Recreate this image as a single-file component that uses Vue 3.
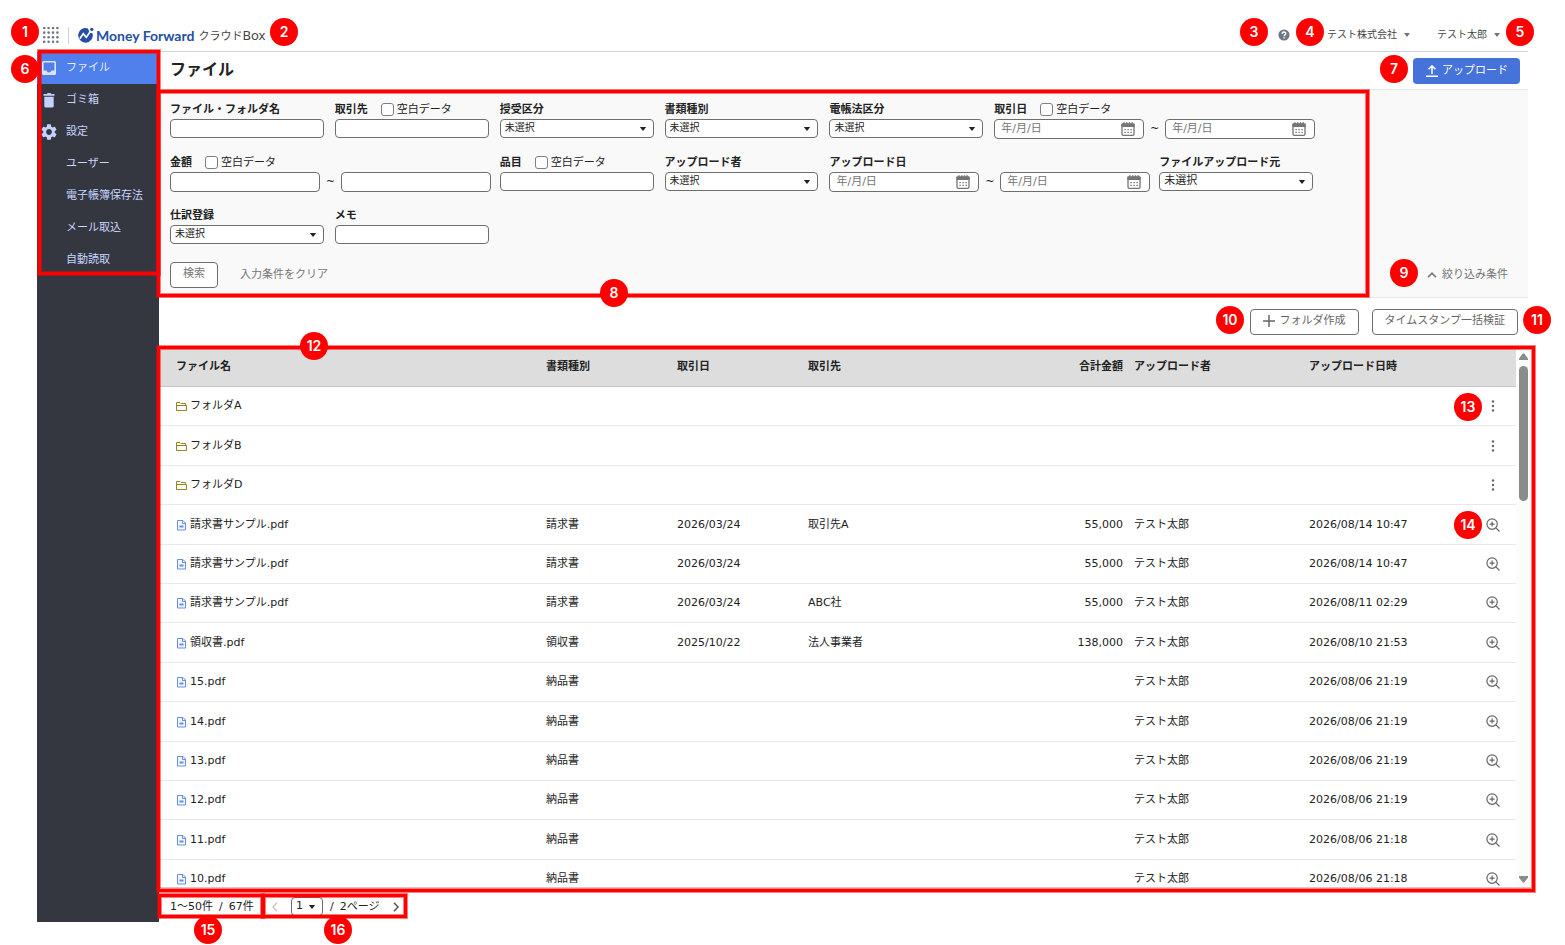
<script setup>
import { ref } from 'vue'

const navItems = [
  { label: 'ファイル', icon: 'inbox', active: true },
  { label: 'ゴミ箱', icon: 'trash' },
  { label: '設定', icon: 'gear' },
  { label: 'ユーザー' },
  { label: '電子帳簿保存法' },
  { label: 'メール取込' },
  { label: '自動読取' },
]

const fields = [
  { id: 'name', label: 'ファイル・フォルダ名', type: 'text' },
  { id: 'partner', label: '取引先', type: 'text', blank: true },
  { id: 'direction', label: '授受区分', type: 'select' },
  { id: 'doctype', label: '書類種別', type: 'select' },
  { id: 'lawtype', label: '電帳法区分', type: 'select' },
  { id: 'trade-date', label: '取引日', type: 'date', blank: true },
  { id: 'amount', label: '金額', type: 'range', blank: true },
  { id: 'item', label: '品目', type: 'text', blank: true },
  { id: 'uploader', label: 'アップロード者', type: 'select' },
  { id: 'upload-date', label: 'アップロード日', type: 'date' },
  { id: 'source', label: 'ファイルアップロード元', type: 'select', large: true },
  { id: 'journal', label: '仕訳登録', type: 'select' },
  { id: 'memo', label: 'メモ', type: 'text' },
]

const folder = (name, badge) => ({ folder: true, name, badge })
const file = (name, type, date, partner, amount, time, badge) => ({
  name, type, date, partner, amount, user: 'テスト太郎', time, badge,
})

const rows = ref([
  folder('フォルダA', 13),
  folder('フォルダB'),
  folder('フォルダD'),
  file('請求書サンプル.pdf', '請求書', '2026/03/24', '取引先A', '55,000', '2026/08/14 10:47', 14),
  file('請求書サンプル.pdf', '請求書', '2026/03/24', '', '55,000', '2026/08/14 10:47'),
  file('請求書サンプル.pdf', '請求書', '2026/03/24', 'ABC社', '55,000', '2026/08/11 02:29'),
  file('領収書.pdf', '領収書', '2025/10/22', '法人事業者', '138,000', '2026/08/10 21:53'),
  file('15.pdf', '納品書', '', '', '', '2026/08/06 21:19'),
  file('14.pdf', '納品書', '', '', '', '2026/08/06 21:19'),
  file('13.pdf', '納品書', '', '', '', '2026/08/06 21:19'),
  file('12.pdf', '納品書', '', '', '', '2026/08/06 21:19'),
  file('11.pdf', '納品書', '', '', '', '2026/08/06 21:18'),
  file('10.pdf', '納品書', '', '', '', '2026/08/06 21:18'),
])
</script>

<template>
  <div class="page">
    <header class="topbar">
      <button class="plain" type="button" aria-label="アプリ一覧">
        <svg class="icon16" viewBox="0 0 16 16" fill="#6f7787">
          <template v-for="y in 4" :key="y">
            <circle v-for="x in 4" :key="x" :cx="x * 4.4 - 3.2" :cy="y * 4.6 - 3.6" r="1.3" />
          </template>
        </svg>
      </button>
      <a class="logo" href="#">
        <svg class="logo-mark" viewBox="0 0 17 17">
          <path d="M11 1.500A7.300 7.300 0 1 0 15.500 6.300L12.500 5.500z" fill="#2350a2" />
          <path d="M2.800 11.800 6.300 6.600 9.300 10.400 13.200 4.600" fill="none" stroke="#fff" stroke-width="1.700" />
          <circle cx="14.800" cy="2.400" r="1.700" fill="#2350a2" />
        </svg>
        <span class="logo-name">Money Forward</span>
        <span class="logo-product">クラウド<span class="logo-box">Box</span></span>
      </a>
      <div class="account">
        <button class="plain" type="button" aria-label="ヘルプ">
          <svg class="icon12" viewBox="0 0 12 12">
            <circle cx="6" cy="6" r="5.6" fill="#6f7787" />
            <path d="M4.2 4.8C4.2 2.4 7.9 2.5 7.8 4.7 7.7 6 6.1 5.9 6.1 7.2M6.1 8.2v1.4" fill="none" stroke="#fff" stroke-width="1.4" />
          </svg>
        </button>
        <button class="plain company" type="button">テスト株式会社<i class="caret"></i></button>
        <button class="plain user" type="button">テスト太郎<i class="caret"></i></button>
      </div>
      <span class="badge b1">1</span><span class="badge b2">2</span><span class="badge b3">3</span>
      <span class="badge b4">4</span><span class="badge b5">5</span>
    </header>

    <div class="body">
      <aside class="sidebar">
        <nav>
          <a v-for="n in navItems" :key="n.label" href="#" :class="['nav-item', { active: n.active }]">
            <span class="nav-icon">
              <svg v-if="n.icon === 'inbox'" class="icon16" viewBox="0 0 16 16">
                <path fill="#dbe4ff" fill-rule="evenodd" d="M2.500 1h11A1.500 1.500 0 0 1 15 2.500v11a1.500 1.500 0 0 1-1.500 1.500h-11A1.500 1.500 0 0 1 1 13.500v-11A1.500 1.500 0 0 1 2.500 1zM2.600 2.600v8H5.500a2.600 2.600 0 0 0 5 0h2.900v-8z" />
              </svg>
              <svg v-else-if="n.icon === 'trash'" class="icon16" viewBox="0 0 16 16">
                <path fill="#c5d2ff" d="M2.500 2h3.200l1-1h2.600l1 1h3.200v1.700h-11zM3.300 4.700h9.400V14a1.500 1.500 0 0 1-1.500 1.500H4.800A1.500 1.500 0 0 1 3.300 14z" />
              </svg>
              <svg v-else-if="n.icon === 'gear'" class="icon16" viewBox="2 2 20 20">
                <path fill="#c5d2ff" d="M19.140 12.940c.04-.3.06-.61.06-.94 0-.32-.02-.64-.07-.94l2.030-1.580c.18-.14.23-.41.12-.61l-1.920-3.320c-.12-.22-.37-.29-.59-.22l-2.390.96c-.5-.38-1.030-.7-1.620-.94l-.36-2.540c-.04-.24-.24-.41-.48-.41h-3.840c-.24 0-.43.17-.47.41l-.36 2.540c-.59.24-1.130.57-1.620.94l-2.390-.96c-.22-.08-.47 0-.59.22L2.740 8.870c-.12.21-.08.47.12.61l2.030 1.580c-.05.3-.09.63-.09.94s.02.64.07.94l-2.030 1.580c-.18.14-.23.41-.12.61l1.920 3.320c.12.22.37.29.59.22l2.390-.96c.5.38 1.030.7 1.620.94l.36 2.540c.05.24.24.41.48.41h3.840c.24 0 .44-.17.47-.41l.36-2.540c.59-.24 1.130-.56 1.620-.94l2.390.96c.22.08.47 0 .59-.22l1.920-3.320c.12-.22.07-.47-.12-.61l-2.010-1.580zM12 15.600c-1.980 0-3.600-1.620-3.600-3.600s1.620-3.600 3.600-3.600 3.600 1.620 3.600 3.600-1.620 3.600-3.600 3.600z" />
              </svg>
            </span>
            {{ n.label }}
          </a>
          <span class="frame f6" aria-hidden="true"></span>
          <span class="badge b6">6</span>
        </nav>
      </aside>

      <main>
        <div class="title-row">
          <h1>ファイル</h1>
          <button class="upload" type="button">
            <svg class="icon12" viewBox="0 0 12 12" fill="none" stroke="#fff" stroke-width="1.5">
              <path d="M6 9V1M2.500 4.300 6 .9 9.500 4.300M0 11.200h12" />
            </svg>
            アップロード
          </button>
          <span class="badge b7">7</span>
        </div>

        <section class="filter">
          <form @submit.prevent>
            <div class="fields">
              <div v-for="f in fields" :key="f.id" :class="['field', { wide: f.type === 'date' || f.type === 'range' }]">
                <div class="field-head">
                  <label class="field-label" :for="f.id">{{ f.label }}</label>
                  <label v-if="f.blank" class="blank"><input type="checkbox" />空白データ</label>
                </div>
                <input v-if="f.type === 'text'" :id="f.id" class="control" type="text" />
                <div v-else-if="f.type === 'select'" class="select-wrap">
                  <select :id="f.id" :class="['control', { large: f.large }]"><option>未選択</option></select>
                  <svg class="arrow" viewBox="0 0 8 5"><path d="M0 0h8L4 5z" fill="#222" /></svg>
                </div>
                <div v-else class="pair">
                  <template v-for="k in 2" :key="k">
                    <span v-if="k === 2" class="tilde">~</span>
                    <div class="pair-cell">
                      <input
                        :id="k === 1 ? f.id : f.id + '-to'"
                        class="control"
                        type="text"
                        :aria-label="f.label"
                        :placeholder="f.type === 'date' ? '年/月/日' : ''"
                      />
                      <svg v-if="f.type === 'date'" class="calendar" viewBox="0 0 14 14">
                        <path d="M1 2.500h12V12a1.300 1.300 0 0 1-1.300 1.300H2.300A1.300 1.300 0 0 1 1 12z" fill="none" stroke="#757575" stroke-width="1.300" />
                        <path d="M.4 5V2.400A1.300 1.300 0 0 1 1.700 1.200h10.600a1.300 1.300 0 0 1 1.300 1.200V5zM2.300.3h1.400v1.500H2.300zM5.100.3h1.400v1.500H5.100zM7.800.3h1.400v1.500H7.800zM10.400.3h1.400v1.500h-1.400z" fill="#757575" />
                        <path d="M3.400 7.700h7.400M3.400 10.300h7.400" stroke="#757575" stroke-width="1.300" stroke-dasharray="1.400 1.600" />
                      </svg>
                    </div>
                  </template>
                </div>
              </div>
            </div>
            <div class="form-actions">
              <button class="outline search" type="submit">検索</button>
              <button class="plain clear" type="reset">入力条件をクリア</button>
            </div>
            <span class="frame f8" aria-hidden="true"></span>
            <span class="badge b8">8</span>
          </form>
          <div class="toggle">
            <button class="plain toggle-button" type="button">
              <svg class="chev-up" viewBox="0 0 10 6" fill="none" stroke="#757575" stroke-width="1.600"><path d="M1 5.300 5 1.200 9 5.300" /></svg>
              絞り込み条件
            </button>
            <span class="badge b9">9</span>
          </div>
        </section>

        <div class="actions">
          <button class="outline" type="button">
            <svg class="icon12" viewBox="0 0 12 12" stroke="#666" stroke-width="1.500"><path d="M6 0v12M0 6h12" /></svg>
            フォルダ作成
          </button>
          <button class="outline" type="button">タイムスタンプ一括検証</button>
          <span class="badge b10">10</span><span class="badge b11">11</span>
        </div>

        <section class="pane">
          <div class="scroller">
            <table>
              <colgroup>
                <col /><col class="c-type" /><col class="c-type" /><col class="c-partner" /><col class="c-amount" />
                <col class="c-user" /><col class="c-time" /><col class="c-menu" />
              </colgroup>
              <thead>
                <tr>
                  <th>ファイル名</th><th>書類種別</th><th>取引日</th><th>取引先</th><th class="num">合計金額</th>
                  <th>アップロード者</th><th>アップロード日時</th><th></th>
                </tr>
              </thead>
              <tbody>
                <tr v-for="(r, i) in rows" :key="i">
                  <td>
                    <span class="file-name">
                      <svg v-if="r.folder" class="icon12" viewBox="0 0 12 12" fill="none" stroke="#96841c" stroke-width="1">
                        <path d="M.5 10.500v-8H4L5 3.500h4.500v2M.5 5.500h10v5H.5z" />
                      </svg>
                      <svg v-else class="icon12" viewBox="0 0 12 12" fill="none" stroke="#6a8ede">
                        <path d="M1.500 1.500h5.500L9.500 4v7h-8z" fill="#f2f6ff" /><path d="M6.500 1.500v3h3" />
                        <path d="M3.500 6.500h4v2h-4z" fill="#6a8ede" stroke="none" />
                      </svg>
                      {{ r.name }}
                    </span>
                  </td>
                  <td>{{ r.type }}</td>
                  <td>{{ r.date }}</td>
                  <td>{{ r.partner }}</td>
                  <td class="num">{{ r.amount }}</td>
                  <td>{{ r.user }}</td>
                  <td>{{ r.time }}</td>
                  <td class="menu-cell">
                    <button v-if="r.folder" class="plain" type="button" aria-label="メニュー">
                      <svg class="icon14" viewBox="0 0 14 14" fill="#666"><circle cx="7" cy="2.500" r="1.200" /><circle cx="7" cy="7" r="1.200" /><circle cx="7" cy="11.500" r="1.200" /></svg>
                    </button>
                    <button v-else class="plain" type="button" aria-label="プレビュー">
                      <svg class="icon14" viewBox="0 0 14 14" fill="none" stroke="#666" stroke-width="1.200">
                        <circle cx="6.100" cy="6.100" r="5.200" /><path d="M9.900 9.900 13.500 13.500M3.600 6.100h5M6.100 3.600v5" />
                      </svg>
                    </button>
                    <span v-if="r.badge" class="badge row-badge">{{ r.badge }}</span>
                  </td>
                </tr>
              </tbody>
            </table>
            <div class="scrollbar" aria-hidden="true">
              <svg class="sb-arrow" viewBox="0 0 9 7"><path d="M3.800.5h1.400L9 5.500V7H0V5.500z" fill="#8b8b8b" /></svg>
              <span class="thumb"></span>
              <svg class="sb-arrow" viewBox="0 0 9 7"><path d="M3.800 6.500h1.400L9 1.500V0H0v1.500z" fill="#8b8b8b" /></svg>
            </div>
          </div>
          <span class="frame f12" aria-hidden="true"></span>
          <span class="badge b12">12</span>
        </section>

        <footer class="pager-row">
          <div class="count">
            <span>1〜50件</span><span>/</span><span>67件</span>
            <span class="frame f15" aria-hidden="true"></span>
            <span class="badge b15">15</span>
          </div>
          <div class="pager">
            <button class="plain" type="button" aria-label="前のページ">
              <svg class="chev" viewBox="0 0 6 10" fill="none" stroke="#c4c4c4" stroke-width="1.300"><path d="M5 .8 1 5l4 4.200" /></svg>
            </button>
            <div class="select-wrap page-select">
              <select class="control large" aria-label="ページ"><option>1</option></select>
              <svg class="arrow" viewBox="0 0 8 5"><path d="M0 0h8L4 5z" fill="#222" /></svg>
            </div>
            <span class="page-total"><span>/</span><span>2ページ</span></span>
            <button class="plain" type="button" aria-label="次のページ">
              <svg class="chev" viewBox="0 0 6 10" fill="none" stroke="#555" stroke-width="1.500"><path d="M1 .8 5 5 1 9.200" /></svg>
            </button>
            <span class="frame f16" aria-hidden="true"></span>
            <span class="badge b16">16</span>
          </div>
        </footer>
      </main>
    </div>
  </div>
</template>

<style>
body {
  background: #fff;
}
</style>

<style scoped>
* {
  box-sizing: border-box;
}
.page {
  display: flex;
  flex-direction: column;
  height: 100vh;
  padding: 0 37px 23px;
  overflow: hidden;
  color: #222;
  font: 11px/16px "DejaVu Sans", "Noto Sans CJK JP", sans-serif;
}
button,
input,
select {
  font: inherit;
  color: inherit;
}
a {
  color: inherit;
  text-decoration: none;
}
svg {
  display: block;
  flex: none;
}
.plain {
  display: flex;
  align-items: center;
  padding: 0;
  border: 0;
  background: none;
}
.icon16 { width: 16px; height: 16px; }
.icon14 { width: 14px; height: 14px; }
.icon12 { width: 12px; height: 12px; }

/* numbered callouts */
.badge {
  position: absolute;
  z-index: 3;
  width: 28px;
  height: 28px;
  border-radius: 50%;
  background: #f00;
  color: #fff;
  font: 600 14px/28px Inter, sans-serif;
  text-align: center;
}
.frame {
  position: absolute;
  z-index: 2;
  border: 3px solid #f00;
  box-shadow: 0 0 0 1px rgba(255, 0, 0, 0.5), inset 0 0 0 1px rgba(255, 0, 0, 0.5);
  pointer-events: none;
}
.b1 { left: -26px; top: 18px; }
.b2 { left: 233px; top: 18px; }
.b3 { right: 260px; top: 18px; }
.b4 { right: 204px; top: 18px; }
.b5 { right: -6px; top: 18px; }
.b6 { left: -26px; top: 3px; }
.b7 { right: 120px; top: 3px; }
.b8 { left: 441px; bottom: -10px; }
.b9 { right: 110px; bottom: 10px; }
.b10 { right: 284px; top: 8px; }
.b11 { right: -23px; top: 8px; }
.b12 { left: 141px; top: -14px; }
.b15 { left: 35px; top: 28px; }
.b16 { left: 60px; top: 28px; }
.f6 { inset: -2px -1px 1px 1px; }
.f8 { inset: 0 0 0 -2px; }
.f12 { inset: 0 -4px -4px -2px; }
.f15 { inset: 6px 0 4px -1px; }
.f16 { inset: 6px 0 4px -2px; }

.topbar {
  position: relative;
  display: flex;
  align-items: center;
  height: 52px;
  padding: 19px 0 0 6px;
  border-bottom: 1px solid #d4d4d4;
}
.logo {
  display: flex;
  align-items: center;
  height: 17px;
  margin-left: 9px;
  padding-left: 8px;
  border-left: 1px solid #d4d4d4;
}
.logo-mark {
  width: 17px;
  height: 17px;
}
.logo-name {
  margin: 0 4px 0 2px;
  color: #2350a2;
  font: 700 14px/17px Lato, sans-serif;
}
.logo-product {
  color: #444;
  font: 11px/17px "Noto Sans CJK JP", sans-serif;
}
.logo-box {
  font: 13px/17px "Noto Sans", sans-serif;
}
.account {
  display: flex;
  align-items: center;
  margin-left: auto;
  padding-right: 28px;
  color: #444;
  font-size: 10px;
}
.company {
  margin: 0 27px 0 37px;
}
.caret {
  margin-left: 7px;
  border: 3px solid transparent;
  border-top: 4px solid #6f7787;
  border-bottom: 0;
}

.body {
  display: flex;
  flex: 1;
  min-height: 0;
}
.sidebar {
  flex: none;
  width: 122px;
  background: #34373f;
}
nav {
  position: relative;
}
.nav-item {
  display: flex;
  align-items: center;
  height: 32px;
  padding-left: 4px;
  color: #c9d5ff;
}
.nav-item.active {
  background: #5080ec;
  color: #e6ecff;
}
.nav-icon {
  width: 25px;
}
main {
  display: flex;
  flex: 1;
  flex-direction: column;
  min-width: 0;
}
.title-row {
  position: relative;
  display: flex;
  align-items: center;
  justify-content: space-between;
  height: 37px;
  padding: 0 8px 0 11px;
}
h1 {
  margin: 0;
  padding-bottom: 2px;
  font-size: 16px;
  line-height: 20px;
}
.upload {
  display: flex;
  align-items: center;
  gap: 4px;
  height: 26px;
  padding: 0 12px 0 13px;
  border: 0;
  border-radius: 4px;
  background: #4573da;
  color: #fff;
}

.filter {
  display: flex;
  border: solid #e8e8e8;
  border-width: 1px 0;
  background: #f9f9f9;
}
form {
  position: relative;
  flex: 1;
  padding: 10px 56px 9px 11px;
}
.fields {
  display: grid;
  grid-template-columns: repeat(7, minmax(0, 1fr));
  gap: 14px 11px;
}
.wide {
  grid-column: span 2;
}
.field-head {
  display: flex;
  align-items: center;
  height: 19px;
}
.field-label {
  font-weight: 700;
}
.blank {
  display: flex;
  align-items: center;
  gap: 3px;
  margin-left: 13px;
}
.blank input {
  appearance: none;
  width: 13px;
  height: 13px;
  margin: 0;
  border: 1px solid #7b7f8c;
  border-radius: 3px;
  background: #fff;
}
.control {
  display: block;
  width: 100%;
  height: 19px;
  padding: 0 6px 2px;
  border: 1px solid #6e6e6e;
  border-radius: 4px;
  background: #fff;
}
.control::placeholder {
  color: #757575;
}
.select-wrap,
.pair-cell {
  position: relative;
}
select.control {
  appearance: none;
  padding-left: 4px;
  font-size: 10px;
}
select.large {
  font-size: 11px;
}
.arrow {
  position: absolute;
  top: 8px;
  right: 7px;
  width: 8px;
  height: 4px;
  pointer-events: none;
}
.calendar {
  position: absolute;
  top: 3px;
  right: 9px;
  width: 14px;
  height: 14px;
}
.pair {
  display: flex;
  margin-right: -2px;
}
.pair-cell {
  flex: 1;
}
.pair-cell .control {
  height: 20px;
}
.tilde {
  width: 21px;
  line-height: 19px;
  text-align: center;
}
.form-actions {
  display: flex;
  align-items: center;
  gap: 22px;
  margin-top: 18px;
  color: #757575;
}
.outline {
  display: flex;
  align-items: center;
  gap: 5px;
  height: 26px;
  padding: 0 12px 2px;
  border: 1px solid #6e6e6e;
  border-radius: 4px;
  background: #fff;
  color: #666;
}
.form-actions .outline {
  color: #757575;
}
.toggle {
  position: relative;
  display: flex;
  flex: none;
  align-items: flex-end;
  justify-content: flex-end;
  width: 159px;
  padding: 0 20px 14px 0;
  color: #757575;
}
.toggle-button {
  gap: 5px;
}
.chev-up {
  width: 10px;
  height: 6px;
}
.actions {
  position: relative;
  display: flex;
  align-items: center;
  justify-content: flex-end;
  gap: 13px;
  height: 48px;
  padding-right: 10px;
}

.pane {
  position: relative;
  flex: 1;
  min-height: 0;
  margin-right: -3px;
}
.scroller {
  display: flex;
  height: 100%;
  overflow: hidden;
  border-bottom: 1px solid #ccc;
}
table {
  flex: 1;
  align-self: flex-start;
  table-layout: fixed;
  border-collapse: separate;
  border-spacing: 0;
}
.c-type { width: 131px; }
.c-partner { width: 196px; }
.c-amount { width: 130px; }
.c-user { width: 175px; }
.c-time { width: 167px; }
.c-menu { width: 46px; }
th,
td {
  height: 39px;
  padding: 0 5px 0 6px;
  border-bottom: 1px solid #e8e8e8;
  text-align: left;
  white-space: nowrap;
}
th {
  height: 41px;
  padding-top: 2px;
  border-bottom-color: #c6c6c6;
  background: #ddd;
}
tr:nth-child(5n + 2) td,
tr:nth-child(5n + 4) td {
  height: 40px;
}
th:first-child,
td:first-child {
  padding-left: 17px;
}
.num {
  text-align: right;
}
.file-name {
  display: flex;
  align-items: center;
  gap: 2px;
}
.menu-cell {
  position: relative;
  padding: 0 0 0 16px;
}
.row-badge {
  top: 6px;
  right: 34px;
}
.scrollbar {
  display: flex;
  flex: none;
  flex-direction: column;
  align-items: center;
  width: 15px;
  padding: 7px 0 4px;
  background: #fcfcfc;
}
.sb-arrow {
  width: 9px;
  height: 7px;
}
.thumb {
  width: 9px;
  height: 135px;
  margin: 6px 0 auto;
  border-radius: 5px;
  background: #8b8b8b;
}

.pager-row {
  display: flex;
  flex: none;
  height: 34px;
}
.count {
  position: relative;
  display: flex;
  gap: 6px;
  width: 105px;
  padding: 11px 0 0 11px;
  white-space: nowrap;
}
.pager {
  position: relative;
  display: flex;
  align-items: center;
  width: 143px;
  padding: 3px 8px 0 8px;
}
.chev {
  width: 6px;
  height: 10px;
}
.page-select {
  width: 32px;
  margin: 0 7px 0 13px;
}
.page-total {
  display: flex;
  gap: 6px;
  margin-right: auto;
}
</style>
